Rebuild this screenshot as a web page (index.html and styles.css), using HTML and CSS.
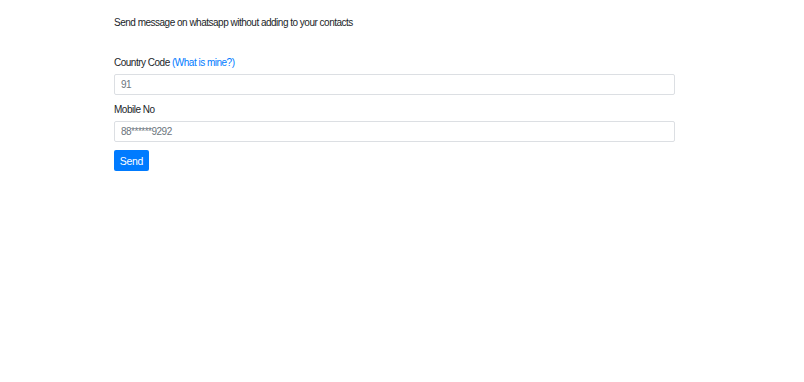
FILE: index.html
```html
<!DOCTYPE html>
<html lang="en">
<head>
    <meta charset="UTF-8">
    <meta name="viewport" content="width=device-width, initial-scale=1.0">
    <title>WhatsApp Direct</title>
    <link rel="stylesheet" href="styles.css">
</head>
<body>
    <main class="container">
        <p class="intro">Send message on whatsapp without adding to your contacts</p>

        <form class="send-form">
            <div class="form-group">
                <label for="countryCode">Country Code <a href="#">(What is mine?)</a></label>
                <input type="text" id="countryCode" class="form-control" value="91">
            </div>
            <div class="form-group">
                <label for="mobileNo">Mobile No</label>
                <input type="text" id="mobileNo" class="form-control" value="88******9292">
            </div>
            <button type="button" class="btn-send">Send</button>
        </form>
    </main>
</body>
</html>
```

FILE: styles.css
```css
body {
    font-family: 'Liberation Sans', Arial, sans-serif;
    font-size: 10px;
    letter-spacing: -0.5px;
    color: #212529;
    background: #fff;
    margin: 0;
    padding: 0;
}
.container {
    width: 561px;
    margin-left: 114px;
    padding-top: 16px;
}
.intro {
    margin: 0 0 27px;
    line-height: 13px;
}
.form-group {
    margin-bottom: 8px;
}
.form-group label {
    display: block;
    line-height: 13px;
    margin-bottom: 5px;
}
.form-group a {
    color: #007bff;
    text-decoration: none;
}
.form-control {
    display: block;
    box-sizing: border-box;
    width: 100%;
    height: 21px;
    padding: 0 6px;
    font-family: inherit;
    font-size: 10px;
    letter-spacing: -0.5px;
    color: #6c757d;
    border: 1px solid #dcdfe3;
    border-radius: 2px;
    background: #fff;
}
.btn-send {
    display: block;
    width: 35px;
    height: 21px;
    margin-top: 2px;
    padding: 0;
    background-color: #007bff;
    color: #fff;
    border: none;
    border-radius: 2px;
    font-family: inherit;
    font-size: 10.5px;
    letter-spacing: -0.3px;
    cursor: pointer;
}
```
